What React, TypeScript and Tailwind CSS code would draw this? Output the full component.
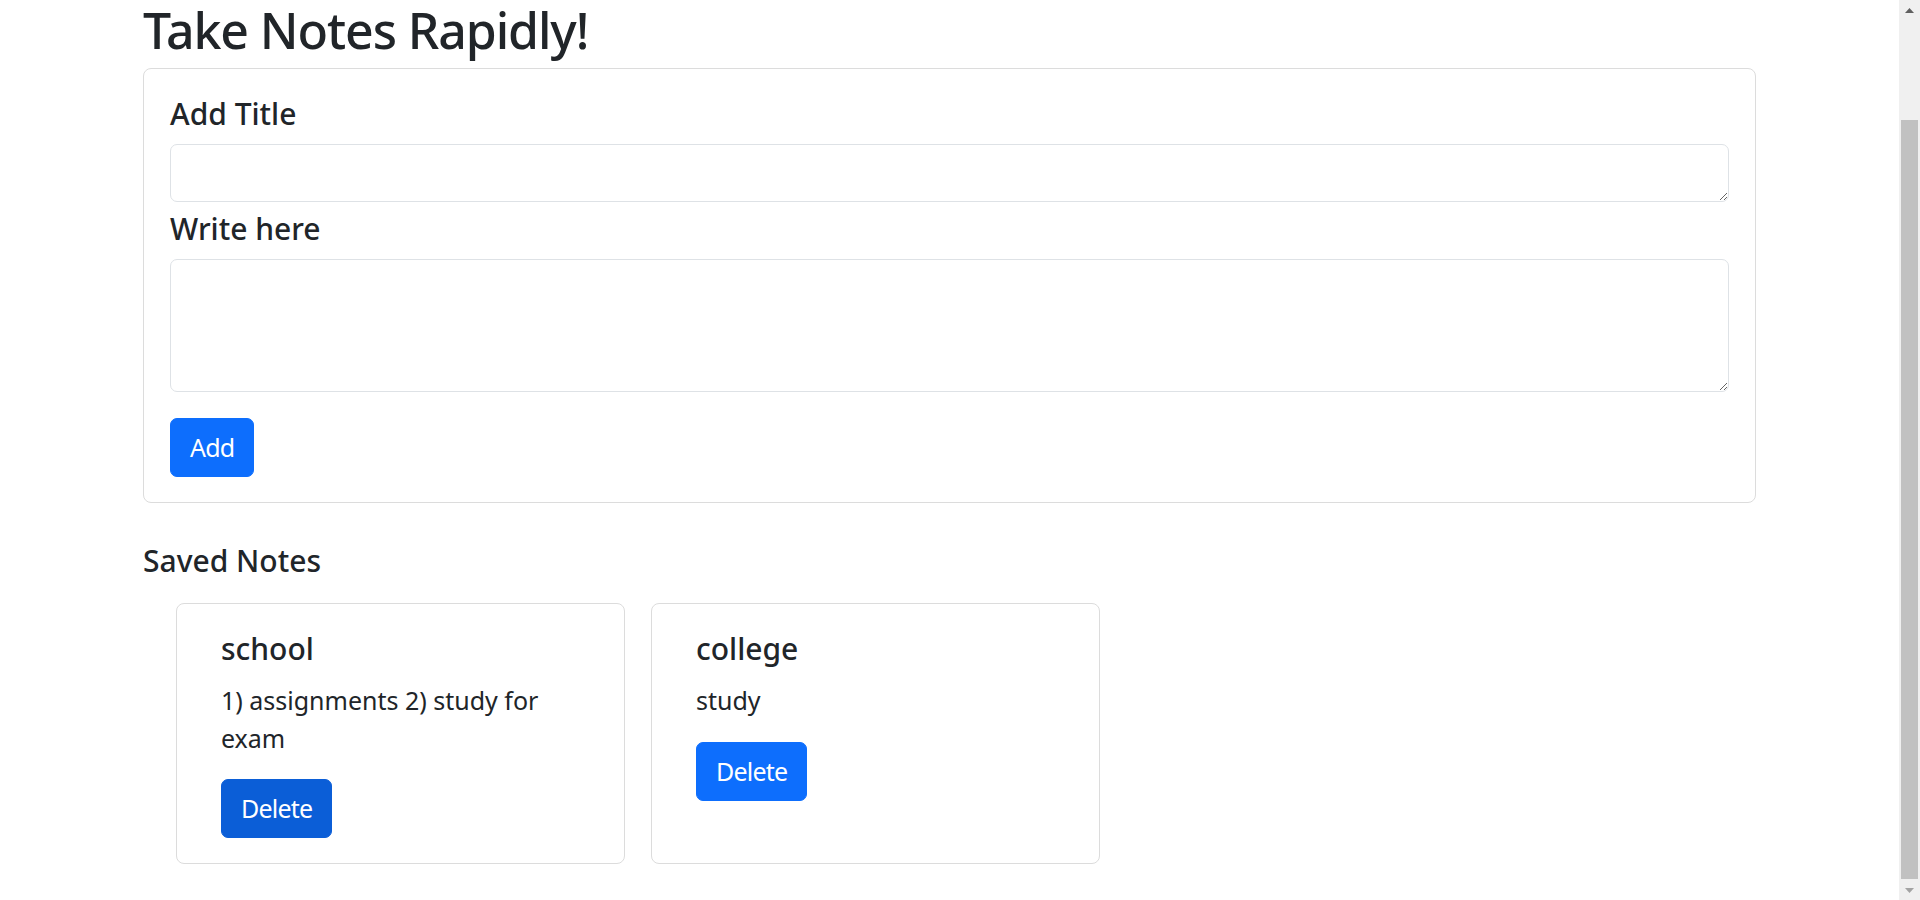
import { useState } from 'react';

type Note = { title: string; text: string };

const initialNotes: Note[] = [
  { title: 'school', text: '1) assignments 2) study for exam' },
  { title: 'college', text: 'study' },
];

const btn = 'rounded-[7px] border px-[19px] py-[10px] text-[25px] leading-[37px] tracking-[-0.8px] text-white';
const heading = 'block text-[30px] leading-[36px] font-medium';

function Scrollbar() {
  return (
    <div className="flex h-[900px] w-[21px] shrink-0 flex-col bg-[#f0f0f0]">
      <div className="flex h-[21px] items-center justify-center">
        <svg width="9" height="5" viewBox="0 0 9 5">
          <path d="M0 5 L4.5 0 L9 5 Z" fill="#606060" />
        </svg>
      </div>
      <div className="flex-1 pt-[99px] pb-[1px] pl-[2px] pr-[2px]">
        <div className="h-full w-[17px] bg-[#c1c1c1]" />
      </div>
      <div className="flex h-[20px] items-center justify-center">
        <svg width="9" height="5" viewBox="0 0 9 5">
          <path d="M0 0 L4.5 5 L9 0 Z" fill="#a3a3a3" />
        </svg>
      </div>
    </div>
  );
}

export default function App() {
  const [notes] = useState<Note[]>(initialNotes);

  return (
    <div className="flex h-[900px] w-full overflow-hidden bg-white font-['Noto_Sans',sans-serif] text-[#212529]">
      <main className="min-w-0 flex-1 pl-[143px]">
        <div className="w-[1613px]">
          <h1 className="mb-[8px] text-[50px] leading-[60px] font-medium tracking-[-1.1px]">Take Notes Rapidly!</h1>

          <div className="rounded-lg border border-[#dcdcdc] px-[26px] pt-[27px] pb-[25px]">
            <label className={heading}>Add Title</label>
            <textarea className="mt-[12px] block h-[58px] w-full rounded-[7px] border border-[#dee2e6] outline-none" />
            <label className={`mt-[9px] ${heading}`}>Write here</label>
            <textarea className="mt-[12px] block h-[133px] w-full rounded-[7px] border border-[#dee2e6] outline-none" />
            <button className={`mt-[26px] border-[#0d6efd] bg-[#0d6efd] ${btn}`}>Add</button>
          </div>

          <h4 className={`mt-[40px] ${heading}`}>Saved Notes</h4>

          <div className="mt-[24px] ml-[33px] flex gap-[26px]">
            {notes.map((note, i) => (
              <div key={note.title} className="flex w-[449px] flex-col rounded-lg border border-[#dcdcdc] px-[44px] pt-[27px] pb-[25px]">
                <h5 className={`mb-[15px] ${heading}`}>{note.title}</h5>
                <p className="text-[25px] leading-[37.5px]">{note.text}</p>
                <div className="mt-[22px]">
                  <button className={i === 0 ? `border-[#0b5ed7] bg-[#0b5ed7] ${btn}` : `border-[#0d6efd] bg-[#0d6efd] ${btn}`}>
                    Delete
                  </button>
                </div>
              </div>
            ))}
          </div>
        </div>
      </main>
      <Scrollbar />
    </div>
  );
}
